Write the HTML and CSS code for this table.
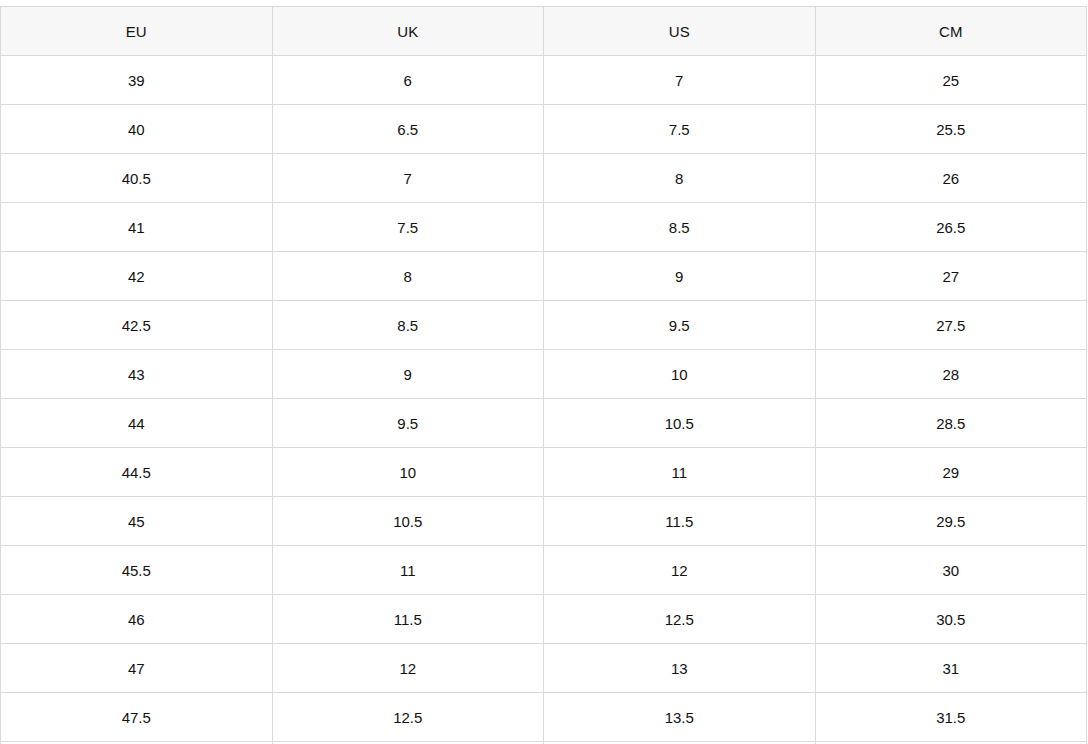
FILE: index.html
```html
<!DOCTYPE html>
<html lang="en">
<head>
<meta charset="utf-8">
<title>Size chart</title>
<link rel="stylesheet" href="styles.css">
</head>
<body>
<table class="size-table">
  <thead>
    <tr><th>EU</th><th>UK</th><th>US</th><th>CM</th></tr>
  </thead>
  <tbody>
    <tr><td>39</td><td>6</td><td>7</td><td>25</td></tr>
    <tr><td>40</td><td>6.5</td><td>7.5</td><td>25.5</td></tr>
    <tr><td>40.5</td><td>7</td><td>8</td><td>26</td></tr>
    <tr><td>41</td><td>7.5</td><td>8.5</td><td>26.5</td></tr>
    <tr><td>42</td><td>8</td><td>9</td><td>27</td></tr>
    <tr><td>42.5</td><td>8.5</td><td>9.5</td><td>27.5</td></tr>
    <tr><td>43</td><td>9</td><td>10</td><td>28</td></tr>
    <tr><td>44</td><td>9.5</td><td>10.5</td><td>28.5</td></tr>
    <tr><td>44.5</td><td>10</td><td>11</td><td>29</td></tr>
    <tr><td>45</td><td>10.5</td><td>11.5</td><td>29.5</td></tr>
    <tr><td>45.5</td><td>11</td><td>12</td><td>30</td></tr>
    <tr><td>46</td><td>11.5</td><td>12.5</td><td>30.5</td></tr>
    <tr><td>47</td><td>12</td><td>13</td><td>31</td></tr>
    <tr><td>47.5</td><td>12.5</td><td>13.5</td><td>31.5</td></tr>
    <tr><td>48</td><td>13</td><td>14</td><td>32</td></tr>
  </tbody>
</table>
</body>
</html>
```
FILE: styles.css
```css
html, body {
  margin: 0;
  padding: 0;
  background: #ffffff;
}
body {
  padding-top: 6px;
  font-family: "Liberation Sans", Arial, sans-serif;
  font-size: 15px;
  color: #111111;
}
.size-table {
  width: 1087px;
  border-collapse: collapse;
  table-layout: fixed;
}
.size-table th,
.size-table td {
  border: 1px solid #d9d9d9;
  height: 47px;
  padding: 1px 0 0;
  text-align: center;
  vertical-align: middle;
  font-weight: normal;
  line-height: 16px;
}
.size-table th {
  background: #f7f7f7;
}
```
